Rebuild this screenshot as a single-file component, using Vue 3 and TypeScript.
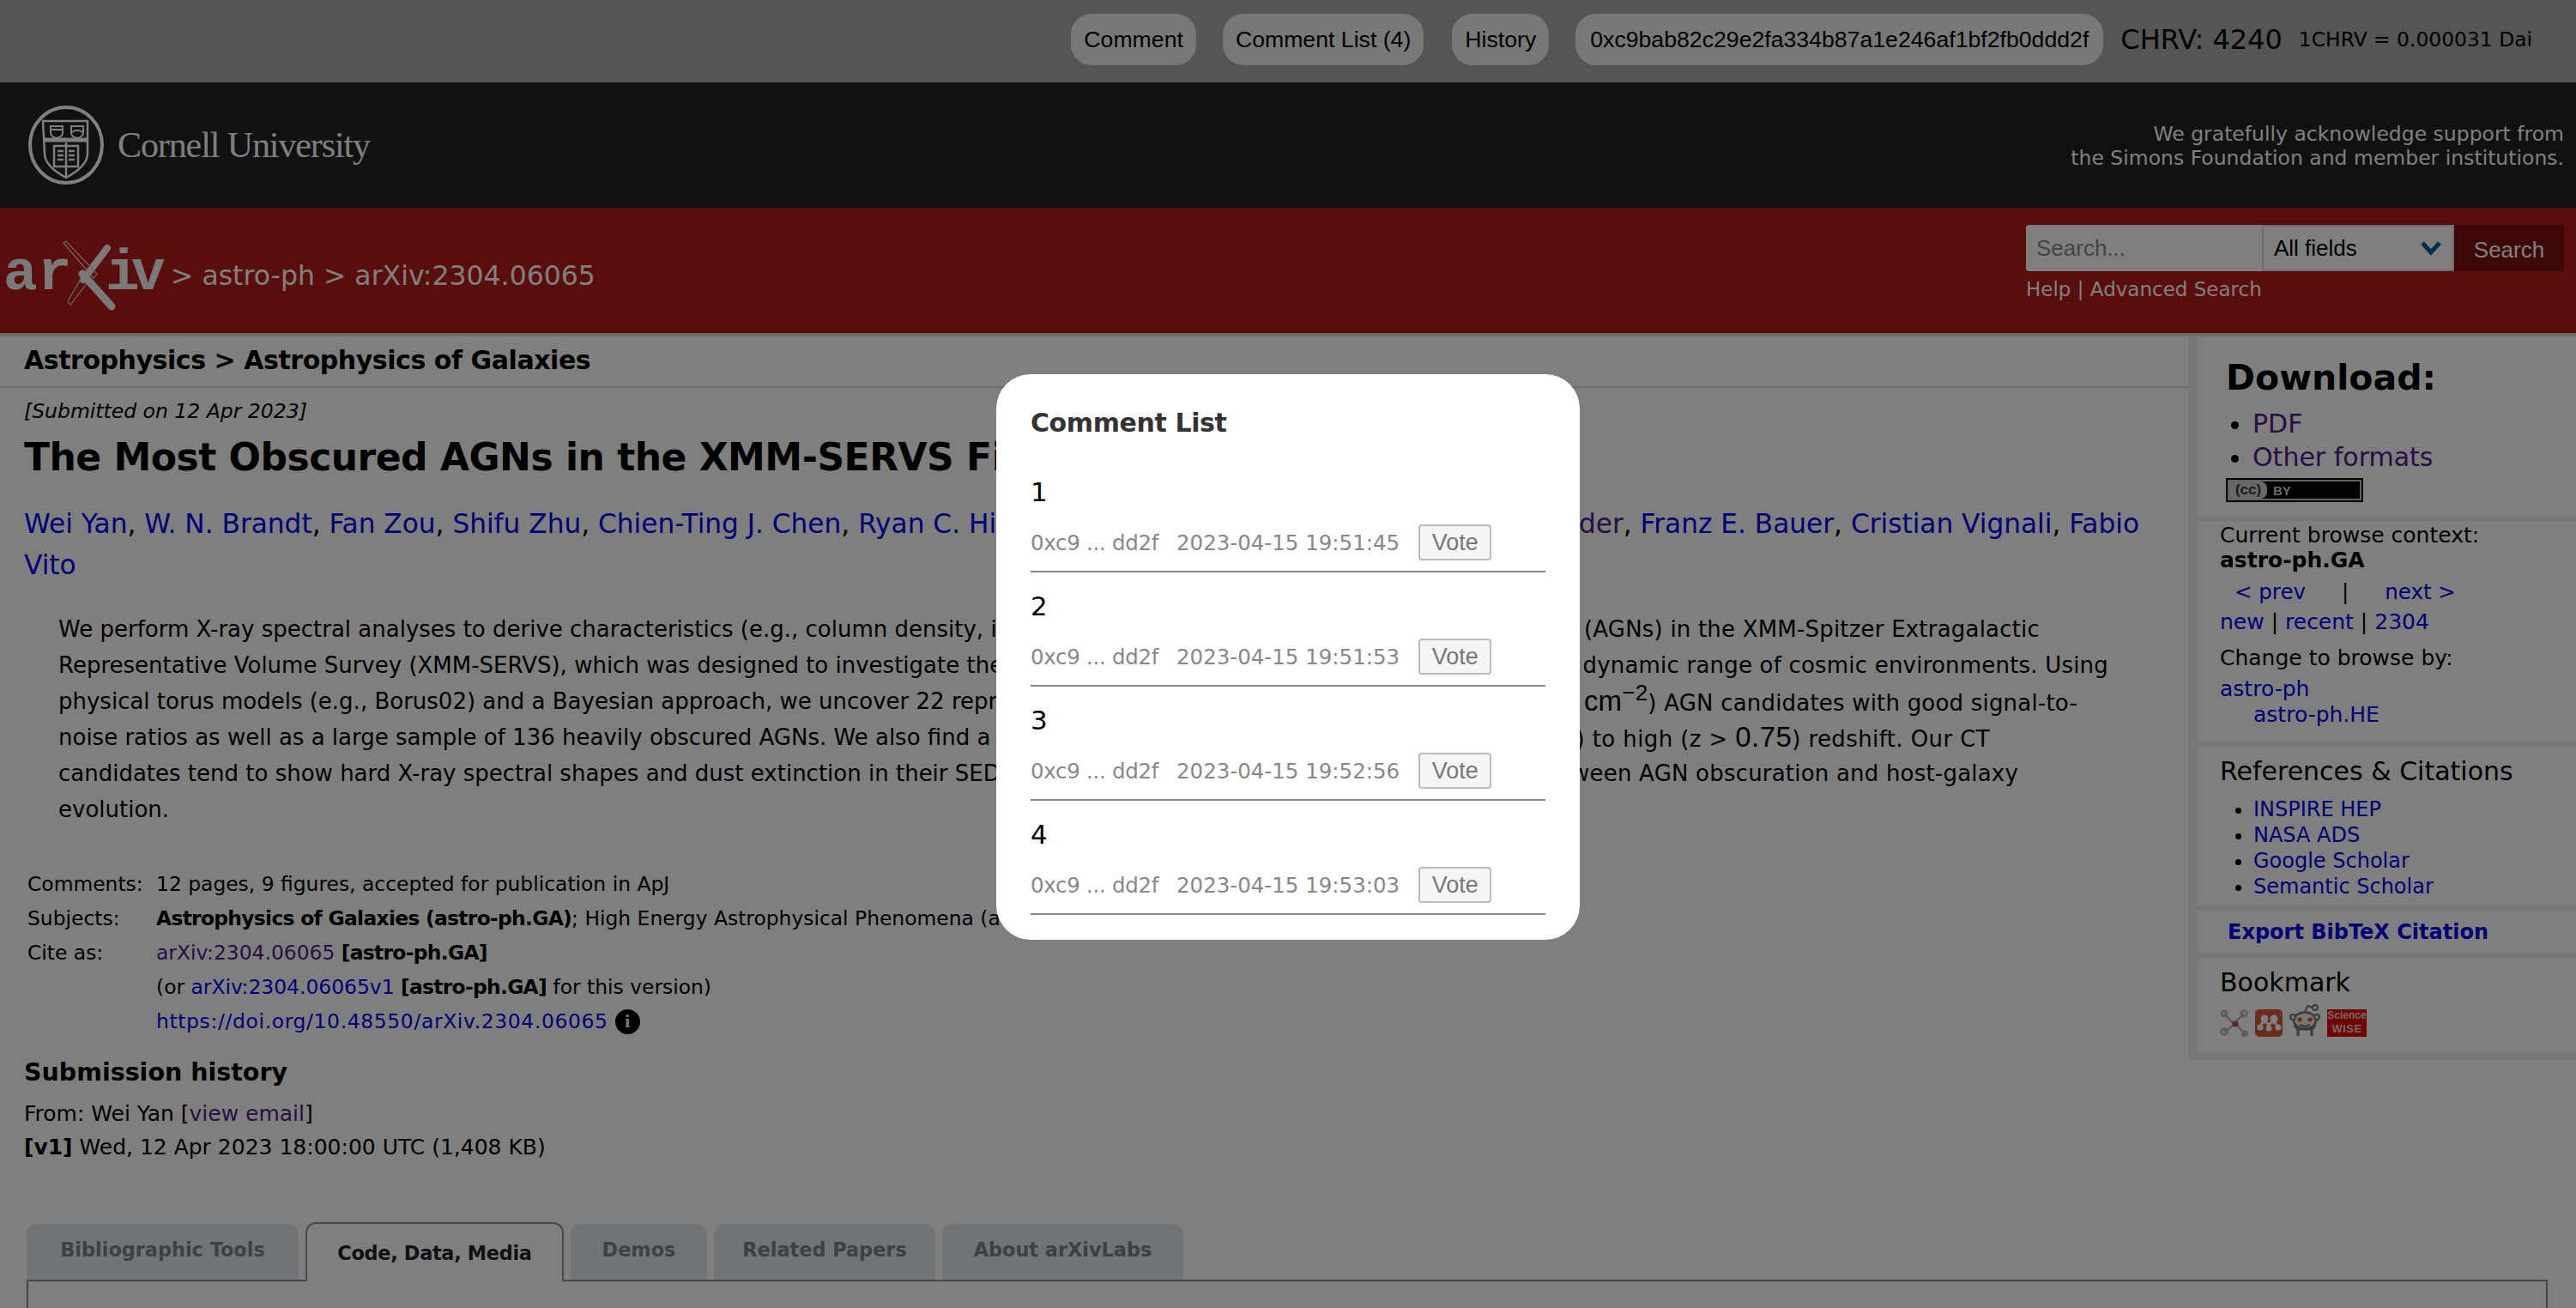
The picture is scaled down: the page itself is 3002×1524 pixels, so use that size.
<script setup lang="ts">
import { ref } from "vue";

const comments = ref([
  { n: 1, time: "2023-04-15 19:51:45" },
  { n: 2, time: "2023-04-15 19:51:53" },
  { n: 3, time: "2023-04-15 19:52:56" },
  { n: 4, time: "2023-04-15 19:53:03" },
]);

const authorsLeft = ["Wei Yan", "W. N. Brandt", "Fan Zou", "Shifu Zhu", "Chien-Ting J. Chen", "Ryan C. Hickox", "Qingling Ni", "Guang Yang"];
const tabs = ["Bibliographic Tools", "Code, Data, Media", "Demos", "Related Papers", "About arXivLabs"];
const refLinks = ["INSPIRE HEP", "NASA ADS", "Google Scholar", "Semantic Scholar"];
</script>

<template>
  <div class="page">
    <div class="topbar">
      <button class="pill">Comment</button>
      <button class="pill gap33">Comment List (4)</button>
      <button class="pill">History</button>
      <button class="pill addr">0xc9bab82c29e2fa334b87a1e246af1bf2fb0ddd2f</button>
      <span class="chrv">CHRV: 4240</span>
      <span class="rate">1CHRV = 0.000031 Dai</span>
    </div>

    <header class="cornell">
      <div class="cornell-logo">
        <svg width="92" height="92" viewBox="0 0 92 92" fill="none" stroke="#fff">
          <ellipse cx="46" cy="46" rx="42" ry="44" stroke-width="4" />
          <path d="M19 18h52v38c0 12-12 21-25 28-13-7-25-16-25-28z" stroke-width="2.500" />
          <path d="M19 40h52" stroke-width="5" />
          <path d="M28 24h14v8c0 3-3 5-7 6-4-1-7-3-7-6zM29 28h12" stroke-width="2" />
          <path d="M52 24h14v8c0 3-3 5-7 6-4-1-7-3-7-6zM53 31c3-3 9-3 12 0" stroke-width="2" />
          <path d="M32 47h28v24H32zM46 43v41" stroke-width="2.500" />
          <path d="M36 53h7M36 58h7M36 63h7M49 53h7M49 58h7M49 63h7" stroke-width="2.500" />
        </svg>
        <span class="cornell-name">Cornell University</span>
      </div>
      <p class="thanks">We gratefully acknowledge support from<br />the Simons Foundation and member institutions.</p>
    </header>

    <div class="redbar">
      <div class="crumbs">
        <svg class="arxiv-logo" width="190" height="90" viewBox="0 0 190 90">
          <text x="1" y="60" class="logo-text">a</text>
          <text x="41" y="60" class="logo-text">r</text>
          <text x="120" y="60" class="logo-text">i</text>
          <text x="150" y="60" class="logo-text">v</text>
          <path d="M122 12 94 49" stroke="#f2f2f2" stroke-width="8" stroke-linecap="round" fill="none" />
          <path d="M93 42 127 80" stroke="#f2f2f2" stroke-width="9" stroke-linecap="round" fill="none" />
          <path d="M71 6 74 4 110 42 106 47zM91 48 76 74 79 78 99 52" stroke="#f2c8c8" stroke-width="1.200" fill="none" />
        </svg>
        <span class="crumb-text">&gt; astro-ph &gt; arXiv:2304.06065</span>
      </div>
      <div class="search">
        <div class="search-row">
          <input class="search-input" placeholder="Search..." />
          <div class="search-select">
            <span>All fields</span>
            <svg width="26" height="18" viewBox="0 0 26 18" fill="none">
              <path d="M3 3 13 14 23 3" stroke="#005e9d" stroke-width="5" />
            </svg>
          </div>
          <button class="search-btn">Search</button>
        </div>
        <div class="search-links">Help | Advanced Search</div>
      </div>
    </div>

    <div class="content">
      <main class="main">
        <div class="subject-head">Astrophysics &gt; Astrophysics of Galaxies</div>
        <div class="article">
          <div class="dateline">[Submitted on 12 Apr 2023]</div>
          <h1 class="title">The Most Obscured AGNs in the XMM-SERVS Fields</h1>
          <div class="authors">
            <div class="seg-line">
              <span class="seg-l"><template v-for="a in authorsLeft" :key="a"><a>{{ a }}</a>, </template></span>
              <span class="seg-r"><a class="seen">David M. Alexander</a>, <a>Franz E. Bauer</a>, <a>Cristian Vignali</a>, <a>Fabio</a></span>
            </div>
            <div><a>Vito</a></div>
          </div>
          <blockquote class="abstract">
            <div class="seg-line l1">
              <span class="seg-l">We perform X-ray spectral analyses to derive characteristics (e.g., column density, intrinsic luminosity) of the active galactic nuclei</span>
              <span class="seg-r">(AGNs) in the XMM-Spitzer Extragalactic</span>
            </div>
            <div class="seg-line l2">
              <span class="seg-l">Representative Volume Survey (XMM-SERVS), which was designed to investigate the growth of supermassive black holes across a wide</span>
              <span class="seg-r">dynamic range of cosmic environments. Using</span>
            </div>
            <div class="seg-line l3">
              <span class="seg-l">physical torus models (e.g., Borus02) and a Bayesian approach, we uncover 22 representative Compton-thick (CT; N<sub>H</sub> &gt; 1.5 × 10<sup>24</sup></span>
              <span class="seg-r"><span class="math">cm<sup>−2</sup></span>) AGN candidates with good signal-to-</span>
            </div>
            <div class="seg-line l4">
              <span class="seg-l">noise ratios as well as a large sample of 136 heavily obscured AGNs. We also find a rising CT fraction from low (z &lt; 0.75</span>
              <span class="seg-r">) to high (z &gt; <span class="math">0.75</span>) redshift. Our CT</span>
            </div>
            <div class="seg-line l5">
              <span class="seg-l">candidates tend to show hard X-ray spectral shapes and dust extinction in their SEDs, suggesting a possible connection</span>
              <span class="seg-r">between AGN obscuration and host-galaxy</span>
            </div>
            <div class="seg-line">evolution.</div>
          </blockquote>
          <div class="meta">
            <span class="label">Comments:</span>
            <span>12 pages, 9 figures, accepted for publication in ApJ</span>
            <span class="label">Subjects:</span>
            <span class="nowrap"><b class="tight">Astrophysics of Galaxies (astro-ph.GA)</b>; High Energy Astrophysical Phenomena (astro-ph.HE)</span>
            <span class="label">Cite as:</span>
            <span><a class="seen">arXiv:2304.06065</a> <b class="tight">[astro-ph.GA]</b></span>
            <span></span>
            <span>(or <a>arXiv:2304.06065v1</a> <b class="tight">[astro-ph.GA]</b> for this version)</span>
            <span></span>
            <span class="doi"><a>https://doi.org/10.48550/arXiv.2304.06065</a><i class="info">i</i></span>
          </div>
          <h2 class="history-head">Submission history</h2>
          <div class="history">
            From: Wei Yan [<a class="seen">view email</a>]<br />
            <b>[v1]</b> Wed, 12 Apr 2023 18:00:00 UTC (1,408 KB)
          </div>
          <div class="tabs">
            <div v-for="(t, i) in tabs" :key="t" class="tab" :class="{ active: i === 1 }">{{ t }}</div>
          </div>
          <div class="tab-panel"></div>
        </div>
      </main>

      <aside class="side">
        <section class="side-block download">
          <h2>Download:</h2>
          <ul>
            <li><a class="seen">PDF</a></li>
            <li><a class="seen">Other formats</a></li>
          </ul>
          <div class="cc">
            <div class="cc-inner">
              <span class="cc-mark">(cc)</span>
              <span class="cc-by">BY</span>
            </div>
          </div>
        </section>
        <section class="side-block browse">
          <div>Current browse context:</div>
          <div class="ctx"><b>astro-ph.GA</b></div>
          <div class="prevnext"><a>&lt; prev</a><span>|</span><a>next &gt;</a></div>
          <div class="recent"><a>new</a> | <a>recent</a> | <a>2304</a></div>
          <div class="change">Change to browse by:</div>
          <div class="cross"><a>astro-ph</a></div>
          <div class="cross sub"><a>astro-ph.HE</a></div>
        </section>
        <section class="side-block refs">
          <h3>References &amp; Citations</h3>
          <ul>
            <li v-for="l in refLinks" :key="l"><a>{{ l }}</a></li>
          </ul>
        </section>
        <section class="side-block bibtex"><a><b>Export BibTeX Citation</b></a></section>
        <section class="side-block bookmark">
          <h3>Bookmark</h3>
          <div class="marks">
            <svg width="33" height="32" viewBox="0 0 33 32" fill="none" stroke="#b8b8b8" stroke-width="2.500">
              <path d="M5 5 14 15 19 17 29 29M28 5 21 12 17 17 11 22 5 26" />
              <circle cx="5" cy="5" r="3" />
              <circle cx="28" cy="5" r="3.500" />
              <circle cx="5" cy="26" r="3.500" />
              <circle cx="29" cy="28" r="2.500" />
              <circle cx="18" cy="17" r="3.500" fill="#b84a60" stroke="none" />
            </svg>
            <svg width="32" height="32" viewBox="0 0 32 32">
              <rect width="32" height="32" rx="5" fill="#d8583a" />
              <circle cx="11" cy="11" r="4.500" fill="#fff" />
              <circle cx="22" cy="11" r="4.500" fill="#fff" />
              <circle cx="6" cy="21" r="3.500" fill="#fff" />
              <circle cx="16" cy="22" r="3.500" fill="#fff" />
              <circle cx="27" cy="21" r="3.500" fill="#fff" />
              <path d="M7 18c2-4 6-4 9 0 3-4 7-4 9 0" stroke="#fff" stroke-width="3" fill="none" />
            </svg>
            <svg width="36" height="38" viewBox="0 0 36 38" fill="none">
              <ellipse cx="18" cy="19" rx="13" ry="9.500" fill="#eee" stroke="#777" stroke-width="2.500" />
              <circle cx="4" cy="15" r="3" fill="#eee" stroke="#777" stroke-width="2" />
              <circle cx="32" cy="15" r="3" fill="#eee" stroke="#777" stroke-width="2" />
              <circle cx="12" cy="18" r="2.500" fill="#f40" />
              <circle cx="24" cy="18" r="2.500" fill="#f40" />
              <path d="M12 24c4 2 8 2 12 0M18 9l3-7 7 2" stroke="#777" stroke-width="2" />
              <circle cx="30" cy="4" r="3" fill="#eee" stroke="#777" stroke-width="2" />
              <path d="M10 37v-8h16v8M6 24l3 5M30 24l-3 5" stroke="#777" stroke-width="3" />
            </svg>
            <div class="sw"><span>Science</span><span class="sw-big">WISE</span></div>
          </div>
        </section>
      </aside>
    </div>

    <div class="overlay">
      <div class="modal">
        <h3 class="modal-title">Comment List</h3>
        <div v-for="c in comments" :key="c.n" class="comment">
          <div class="comment-num">{{ c.n }}</div>
          <div class="comment-row">
            <span class="who">0xc9 ... dd2f</span>
            <span class="when">{{ c.time }}</span>
            <button class="vote">Vote</button>
          </div>
        </div>
      </div>
    </div>
  </div>
</template>

<style>
html,
body {
  margin: 0;
  height: 100%;
  overflow: hidden;
  background: #fff;
}
</style>

<style scoped>
.page {
  position: relative;
  height: 1524px;
  overflow: hidden;
  font-family: "DejaVu Sans", sans-serif;
  color: #000;
}
a {
  color: #0000ee;
}
a.seen {
  color: #551a8b;
}
h1,
h2,
h3,
p,
ul,
blockquote {
  margin: 0;
  padding: 0;
}

/* wallet bar */
.topbar {
  height: 96px;
  background: #aaa;
  display: flex;
  align-items: center;
  justify-content: flex-end;
  padding: 0 51px 4px 0;
  box-sizing: border-box;
}
.pill {
  height: 60px;
  margin-right: 31px;
  padding: 0 15px;
  border: 0;
  border-radius: 24px;
  background: #f0f0f0;
  color: #000;
  font: 26.67px "Liberation Sans", sans-serif;
}
.pill.gap33 {
  margin-right: 33px;
}
.pill.addr {
  margin-right: 20px;
  padding: 0 17px;
}
.chrv {
  font-size: 32px;
  margin-right: 19px;
}
.rate {
  font-size: 23.4px;
}

/* cornell strip */
.cornell {
  height: 146px;
  background: #222;
  display: flex;
  align-items: center;
  justify-content: space-between;
  padding: 0 14px 0 31px;
}
.cornell-logo {
  display: flex;
  align-items: center;
  gap: 14px;
  color: #fff;
}
.cornell-name {
  font: 42px "Liberation Serif", serif;
  letter-spacing: -1.1px;
}
.thanks {
  color: #fff;
  font-size: 23.5px;
  line-height: 28px;
  text-align: right;
  padding-top: 2px;
}

/* red header */
.redbar {
  height: 146px;
  background: #b31b1b;
  border-bottom: 4px solid #ddd;
  display: flex;
  justify-content: space-between;
  padding: 0 14px 0 3px;
}
.crumbs {
  display: flex;
  align-items: center;
  color: #fff;
}
.arxiv-logo {
  margin-top: 14px;
}
.logo-text {
  font: bold 66px "Liberation Mono", monospace;
  fill: #f2f2f2;
}
.crumb-text {
  font-size: 31.5px;
  margin: 12px 0 0 6px;
  white-space: nowrap;
}
.search {
  padding-top: 20px;
}
.search-row {
  display: flex;
  height: 54px;
}
.search-input {
  width: 275px;
  box-sizing: border-box;
  border: 0;
  border-radius: 4px 0 0 4px;
  padding: 0 12px;
  font: 26px "Liberation Sans", sans-serif;
  background: #fff;
}
.search-input::placeholder {
  color: #888;
}
.search-select {
  width: 224px;
  box-sizing: border-box;
  display: flex;
  align-items: center;
  justify-content: space-between;
  padding: 0 12px;
  background: #fff;
  border: 2px solid #ddd;
  font: 26px "Liberation Sans", sans-serif;
}
.search-btn {
  width: 128px;
  border: 0;
  border-radius: 0 4px 4px 0;
  background: #7a0f0f;
  color: #fff;
  font: 26px "Liberation Sans", sans-serif;
  padding-top: 6px;
}
.search-links {
  color: #fff;
  font-size: 23px;
  margin-top: 5px;
  line-height: 32px;
}

/* page body */
.content {
  display: flex;
  height: 1132px;
}
.main {
  flex: none;
  width: 2551px;
}
.subject-head {
  height: 60px;
  line-height: 56px;
  box-sizing: border-box;
  border-bottom: 2px solid #ddd;
  padding-left: 28px;
  font-size: 30px;
  letter-spacing: -0.45px;
  font-weight: bold;
}
.article {
  padding: 0 28px;
}
.dateline {
  font-style: italic;
  font-size: 23.5px;
  line-height: 30px;
  margin-top: 12px;
}
.title {
  font-size: 44px;
  letter-spacing: -0.5px;
  line-height: 60px;
  margin-top: 9px;
  white-space: nowrap;
}
.authors {
  font-size: 31.2px;
  line-height: 48px;
  margin-top: 23px;
}
.authors .seg-line {
  width: 2465px;
}
/* a line whose two ends are pinned; what lies between sits under the dialog */
.seg-line {
  display: flex;
  justify-content: space-between;
  white-space: pre;
}
.seg-l {
  flex: 0 1 auto;
  min-width: 0;
  overflow: hidden;
}
.seg-r {
  flex: none;
}
.abstract {
  font-size: 26px;
  margin: 30px 0 0 40px;
  white-space: nowrap;
}
.abstract .seg-line {
  height: 42px;
  line-height: 42px;
}
.abstract .seg-r {
  letter-spacing: 0.2px;
}
.abstract .l4 .seg-r {
  letter-spacing: 0.4px;
}
.l1 {
  width: 2309px;
}
.l2 {
  width: 2389px;
}
.l3 {
  width: 2353px;
}
.l4 {
  width: 2251px;
}
.l5 {
  width: 2284px;
}
.abstract sub,
.abstract sup {
  line-height: 0;
}
.math {
  font-family: "Liberation Sans", sans-serif;
  font-size: 33px;
}
.math sup {
  font-size: 26px;
}
.meta {
  display: grid;
  grid-template-columns: 150px 1fr;
  font-size: 23.4px;
  line-height: 40px;
  margin: 46px 0 0 4px;
}
.tight {
  letter-spacing: -0.7px;
}
.nowrap {
  white-space: nowrap;
}
.doi {
  display: flex;
  align-items: center;
}
.doi a {
  letter-spacing: 0.65px;
}
.info {
  width: 29px;
  height: 29px;
  margin-left: 8px;
  border-radius: 50%;
  background: #000;
  color: #fff;
  font: bold 21px/29px "Liberation Serif", serif;
  text-align: center;
}
.history-head {
  font-size: 28.5px;
  line-height: 40px;
  margin-top: 20px;
}
.history {
  font-size: 25px;
  line-height: 39px;
  margin-top: 8px;
}
.tabs {
  display: grid;
  grid-template-columns: 317px 301px 159px 258px 281px;
  gap: 8px;
  margin: 70px 0 0 3px;
}
.tab {
  height: 65px;
  box-sizing: border-box;
  line-height: 60px;
  text-align: center;
  white-space: nowrap;
  border-radius: 12px 12px 0 0;
  background: #e2e8ec;
  color: #78828c;
  font-size: 22.4px;
  font-weight: bold;
}
.tab.active {
  height: 69px;
  margin-top: -2px;
  background: #fff;
  color: #222;
  border: 2px solid #8a9098;
  border-bottom: 0;
  position: relative;
  z-index: 1;
  line-height: 68px;
  margin-bottom: -2px;
  letter-spacing: -0.3px;
}
.tab-panel {
  margin-left: 3px;
  width: 2938px;
  height: 100px;
  box-sizing: border-box;
  border: 2px solid #8a9098;
}

/* sidebar */
.side {
  flex: 1;
  align-self: flex-start;
  border-left: 10px solid #eee;
  border-bottom: 9px solid #eee;
}
.side-block {
  border-bottom: 6px solid #eee;
  padding: 0 0 0 26px;
  font-size: 24px;
}
.side-block:last-child {
  border-bottom: 0;
}
.side-block ul {
  list-style: disc;
}
.download {
  height: 215px;
  box-sizing: border-box;
  padding-left: 33px;
}
.download h2 {
  font-size: 41px;
  line-height: 56px;
  padding-top: 20px;
}
.download ul {
  font-size: 30px;
  line-height: 38.5px;
  padding: 7px 0 0 31px;
}
.cc {
  width: 160px;
  height: 28px;
  box-sizing: border-box;
  margin-top: 5px;
  display: flex;
  background: #000;
  border: 2px solid #000;
}
.cc-inner {
  flex: 1;
  display: flex;
  align-items: center;
  overflow: hidden;
  background: #000;
  border: 2px solid #c0c0c0;
}
.cc-mark {
  width: 44px;
  height: 100%;
  background: #d0d0d0;
  color: #333;
  font: bold 17px/19px "Liberation Sans", sans-serif;
  text-align: center;
  border-radius: 0 8px 8px 0;
}
.cc-by {
  color: #d0d0d0;
  font: bold 15px "Liberation Sans", sans-serif;
  margin-left: 7px;
}
.browse {
  height: 263px;
  box-sizing: border-box;
  padding-top: 2px;
  line-height: 29px;
  font-size: 25px;
}
.prevnext {
  display: flex;
  gap: 42px;
  margin: 8px 0 0 17px;
  line-height: 29px;
  font-size: 24.5px;
}
.recent {
  margin-top: 6px;
}
.change {
  margin-top: 13px;
}
.cross {
  margin-top: 7px;
}
.cross.sub {
  margin: 1px 0 0 39px;
}
.refs {
  height: 191px;
  box-sizing: border-box;
}
.refs h3 {
  font-size: 30px;
  font-weight: normal;
  line-height: 38px;
  padding-top: 10px;
}
.refs ul {
  padding: 10px 0 0 39px;
  line-height: 30px;
}
.bibtex {
  height: 55px;
  line-height: 50px;
  padding-left: 35px;
  box-sizing: border-box;
}
.bookmark {
  height: 110px;
  box-sizing: border-box;
}
.bookmark h3 {
  font-size: 30px;
  font-weight: normal;
  line-height: 38px;
  padding-top: 10px;
}
.marks {
  display: flex;
  align-items: flex-end;
  gap: 8px;
  margin-top: 6px;
  height: 38px;
}
.sw {
  width: 46px;
  height: 32px;
  display: flex;
  flex-direction: column;
  align-items: center;
  background: #e00a0a;
  color: #f0d0d0;
  font: bold 12px/15px "Liberation Sans", sans-serif;
}
.sw-big {
  font-size: 13px;
  letter-spacing: 0.5px;
}

/* dim layer and dialog */
.overlay {
  position: absolute;
  inset: 0;
  z-index: 5;
  background: rgba(0, 0, 0, 0.5);
  display: flex;
  align-items: flex-start;
  justify-content: center;
}
.modal {
  width: 680px;
  height: 659px;
  box-sizing: border-box;
  margin-top: 436px;
  padding: 38px 40px 0;
  border-radius: 40px;
  background: #fff;
}
.modal-title {
  font-size: 30px;
  letter-spacing: -0.4px;
  line-height: 38px;
  color: #333;
  margin-bottom: 22px;
}
.comment {
  height: 133px;
  box-sizing: border-box;
  border-bottom: 2px solid #888;
  padding-top: 19px;
}
.comment-num {
  font-size: 31px;
  line-height: 40px;
}
.comment-row {
  display: flex;
  align-items: center;
  height: 42px;
  margin-top: 18px;
  color: #888;
  font-size: 24.5px;
  white-space: nowrap;
}
.who {
  width: 150px;
  letter-spacing: -0.3px;
}
.when {
  margin-left: 20px;
}
.vote {
  margin-left: 22px;
  width: 85px;
  height: 42px;
  padding: 0;
  box-sizing: border-box;
  border: 2px solid #bbb;
  border-radius: 4px;
  background: #f5f5f5;
  color: #777;
  font: 27px "Liberation Sans", sans-serif;
}
</style>
